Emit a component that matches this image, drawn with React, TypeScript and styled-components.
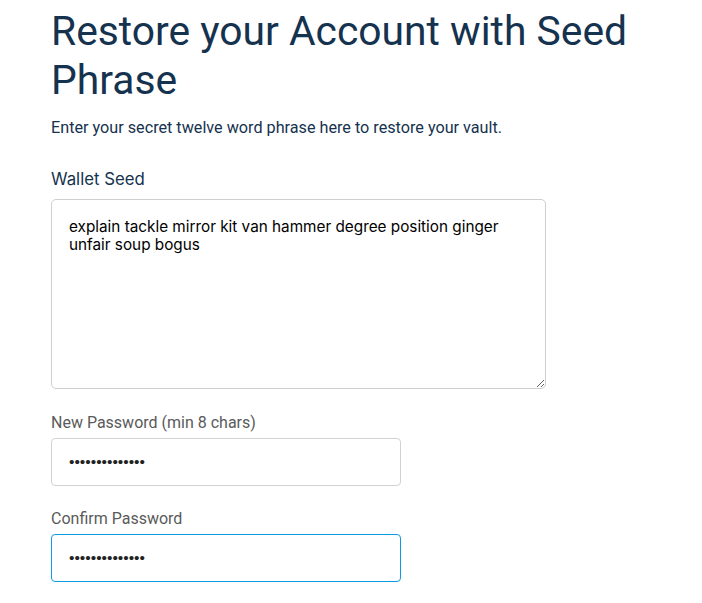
import React from "react";
import styled, { createGlobalStyle } from "styled-components";

const Global = createGlobalStyle`
  html, body { margin: 0; padding: 0; background: #ffffff; }
  body { font-family: Roboto, "Liberation Sans", sans-serif; }
  * { box-sizing: border-box; }
`;

const Page = styled.div`
  padding: 7px 0 0 51px;
  min-height: 592px;
  background: #ffffff;
`;

const Title = styled.h1`
  margin: 0;
  font-family: Roboto, sans-serif;
  font-weight: 400;
  font-size: 40.8px;
  line-height: 49px;
  color: #15324f;
  width: 620px;
`;

const Subtitle = styled.p`
  margin: 13px 0 0;
  font-family: Roboto, sans-serif;
  font-size: 16.2px;
  line-height: 20px;
  color: #15324f;
`;

const Field = styled.div<{ $top: number }>`
  display: flex;
  flex-direction: column;
  margin-top: ${(p) => p.$top}px;
`;

const Label = styled.label<{ $dark?: boolean }>`
  font-family: ${(p) => (p.$dark ? `Inter, "Liberation Sans", sans-serif` : `Roboto, sans-serif`)};
  font-size: ${(p) => (p.$dark ? 16.8 : 16)}px;
  line-height: 20px;
  color: ${(p) => (p.$dark ? "#15324f" : "#5a5a5a")};
  margin-bottom: ${(p) => (p.$dark ? 10 : 5)}px;
`;

const SeedArea = styled.textarea`
  width: 495px;
  height: 190px;
  padding: 18px 17px;
  border: 1px solid #cfcfcf;
  border-radius: 5px;
  font-family: Inter, "Liberation Sans", sans-serif;
  font-size: 15.3px;
  line-height: 18px;
  color: #000;
  resize: both;
  outline: none;
`;

const PasswordInput = styled.input<{ $focused?: boolean }>`
  width: 350px;
  height: 48px;
  padding: 0 17px;
  border: 1px solid ${(p) => (p.$focused ? "#0d9ae6" : "#d2d2d2")};
  border-radius: 4px;
  font-family: "Liberation Sans", sans-serif;
  font-size: 15.5px;
  color: #222;
  outline: none;
`;

export default function App() {
  return (
    <Page>
      <Global />
      <Title>Restore your Account with Seed Phrase</Title>
      <Subtitle>Enter your secret twelve word phrase here to restore your vault.</Subtitle>
      <Field $top={31}>
        <Label $dark>Wallet Seed</Label>
        <SeedArea
          readOnly
          defaultValue="explain tackle mirror kit van hammer degree position ginger unfair soup bogus"
        />
      </Field>
      <Field $top={24}>
        <Label>New Password (min 8 chars)</Label>
        <PasswordInput type="password" readOnly defaultValue="aaaaaaaaaaaaaa" />
      </Field>
      <Field $top={23}>
        <Label>Confirm Password</Label>
        <PasswordInput $focused type="password" readOnly defaultValue="aaaaaaaaaaaaaa" />
      </Field>
    </Page>
  );
}
